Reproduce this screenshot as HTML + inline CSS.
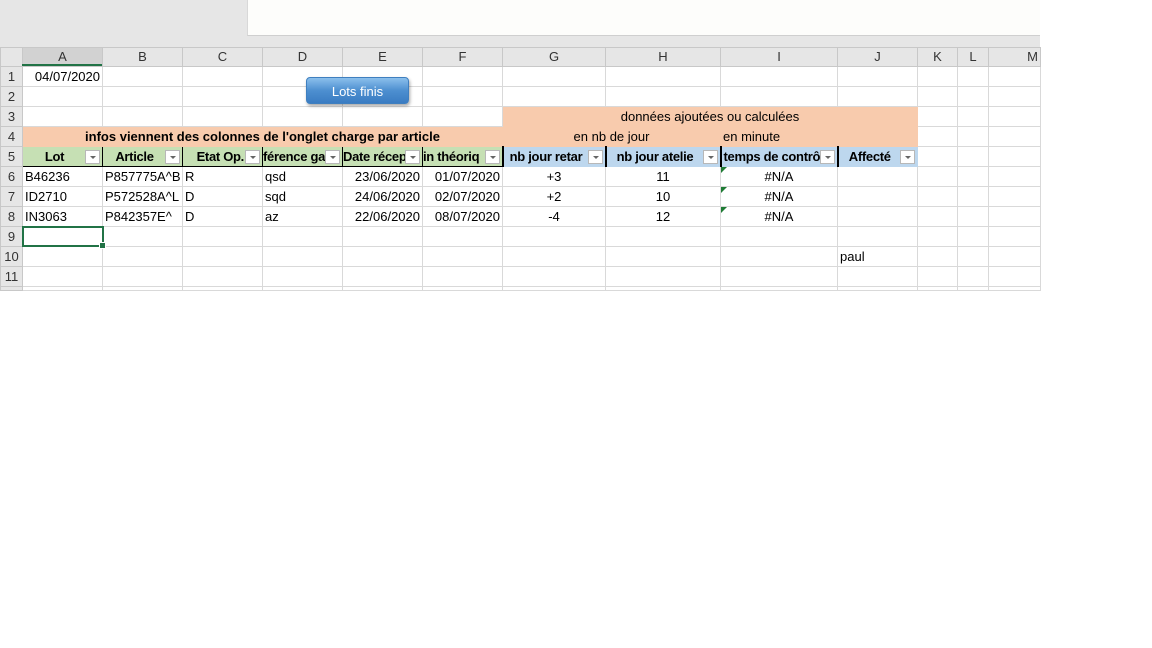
<!DOCTYPE html>
<html><head><meta charset="utf-8"><style>
*{margin:0;padding:0;box-sizing:border-box}
body{width:1152px;height:648px;background:#fff;font-family:"Liberation Sans",sans-serif;font-size:13px;color:#000;position:relative;overflow:hidden}
.top{position:absolute;left:0;top:0;width:1040px;height:47px;background:#e6e6e6}
.wbox{position:absolute;left:247px;top:0;width:793px;height:36px;background:#fdfdfb;border-bottom:1px solid #cfcfcf;border-left:1px solid #d8d8d8}
table{position:absolute;left:0;top:47px;border-collapse:collapse;table-layout:fixed;width:1040px}
td{border:1px solid #d9d9d9;height:20px;white-space:nowrap;overflow:hidden;padding:0 2px;line-height:18px}
tr.ch td{height:19px;background:#e6e6e6;text-align:center;color:#333;border-color:#c8c8c8;font-size:13px}
td.rh{background:#e6e6e6;color:#333;text-align:center;border-color:#c8c8c8;padding:0}
tr.last td{height:4px;line-height:0;font-size:0}
.o{background:#f8cbad;border-color:#f8cbad}
.g{background:#c6e0b4;font-weight:bold;text-align:center;border:1px solid #000;position:relative;padding-right:18px;letter-spacing:-0.3px}
.b{background:#bdd7ee;font-weight:bold;text-align:center;position:relative;padding-right:18px;border-color:#bdd7ee;letter-spacing:-0.3px}
.f{position:absolute;right:2px;top:3px;width:15px;height:14px;background:#fff;border:1px solid #b8b8b8}
.f:after{content:"";position:absolute;left:4px;top:5px;border-left:3px solid transparent;border-right:3px solid transparent;border-top:3px solid #666}
.c{text-align:center}.r{text-align:right}
.tri{position:relative}
.tri:before{content:"";position:absolute;left:0;top:0;border-top:6px solid #1e7b34;border-right:6px solid transparent}
.btn{position:absolute;left:306px;top:77px;width:103px;height:27px;border-radius:4px;background:linear-gradient(#8cc0ec,#4d8fd0 50%,#3a7cc2);color:#fff;text-align:center;line-height:27px;font-size:13px;box-shadow:1px 2px 3px rgba(0,0,0,.35);border:1px solid #3f7fbf}
.sel{position:absolute;left:22px;top:226px;width:82px;height:21px;border:2px solid #217346}
.sel:after{content:"";position:absolute;right:-4px;bottom:-4px;width:5px;height:5px;background:#217346;border:1px solid #fff}
.acol{position:absolute;left:22px;top:64px;width:80px;height:2px;background:#217346}
</style></head><body>
<div class="top"></div><div class="wbox"></div>
<table>
<colgroup><col style="width:22px"><col style="width:80px"><col style="width:80px"><col style="width:80px"><col style="width:80px"><col style="width:80px"><col style="width:80px"><col style="width:103px"><col style="width:115px"><col style="width:117px"><col style="width:80px"><col style="width:40px"><col style="width:31px"><col style="width:52px"></colgroup>
<tr class="ch"><td></td><td style="background:#d2d2d2">A</td><td>B</td><td>C</td><td>D</td><td>E</td><td>F</td><td>G</td><td>H</td><td>I</td><td>J</td><td>K</td><td>L</td><td style="text-align:right">M</td></tr>
<tr><td class="rh">1</td><td class="r">04/07/2020</td><td></td><td></td><td></td><td></td><td></td><td></td><td></td><td></td><td></td><td></td><td></td><td></td></tr>
<tr><td class="rh">2</td><td></td><td></td><td></td><td></td><td></td><td></td><td></td><td></td><td></td><td></td><td></td><td></td><td></td></tr>
<tr><td class="rh">3</td><td></td><td></td><td></td><td></td><td></td><td></td><td class="o c" colspan="4">données ajoutées ou calculées</td><td></td><td></td><td></td></tr>
<tr><td class="rh">4</td><td class="o c" colspan="6" style="font-weight:bold">infos viennent des colonnes de l'onglet charge par article</td><td class="o c" colspan="2">en nb de jour</td><td class="o">en minute</td><td class="o"></td><td></td><td></td><td></td></tr>
<tr><td class="rh">5</td><td class="g">Lot<span class="f"></span></td><td class="g">Article<span class="f"></span></td><td class="g" style="text-align:right">Etat Op.<span class="f"></span></td><td class="g" style="text-align:left;padding-left:0">férence ga<span class="f"></span></td><td class="g" style="text-align:left;padding-left:0">Date récep<span class="f"></span></td><td class="g" style="text-align:left;padding-left:0">in théoriq<span class="f"></span></td><td class="b" style="border-left:2px solid #000">nb jour retar<span class="f"></span></td><td class="b" style="border-left:2px solid #000">nb jour atelie<span class="f"></span></td><td class="b" style="text-align:left;border-left:2px solid #000">temps de contrô<span class="f"></span></td><td class="b" style="border-left:2px solid #000">Affecté<span class="f"></span></td><td></td><td></td><td></td></tr>
<tr><td class="rh">6</td><td>B46236</td><td>P857775A^B</td><td>R</td><td>qsd</td><td class="r">23/06/2020</td><td class="r">01/07/2020</td><td class="c">+3</td><td class="c">11</td><td class="c tri">#N/A</td><td></td><td></td><td></td><td></td></tr>
<tr><td class="rh">7</td><td>ID2710</td><td>P572528A^L</td><td>D</td><td>sqd</td><td class="r">24/06/2020</td><td class="r">02/07/2020</td><td class="c">+2</td><td class="c">10</td><td class="c tri">#N/A</td><td></td><td></td><td></td><td></td></tr>
<tr><td class="rh">8</td><td>IN3063</td><td>P842357E^</td><td>D</td><td>az</td><td class="r">22/06/2020</td><td class="r">08/07/2020</td><td class="c">-4</td><td class="c">12</td><td class="c tri">#N/A</td><td></td><td></td><td></td><td></td></tr>
<tr><td class="rh">9</td><td></td><td></td><td></td><td></td><td></td><td></td><td></td><td></td><td></td><td></td><td></td><td></td><td></td></tr>
<tr><td class="rh">10</td><td></td><td></td><td></td><td></td><td></td><td></td><td></td><td></td><td></td><td>paul</td><td></td><td></td><td></td></tr>
<tr><td class="rh">11</td><td></td><td></td><td></td><td></td><td></td><td></td><td></td><td></td><td></td><td></td><td></td><td></td><td></td></tr>
<tr class="last"><td class="rh"></td><td></td><td></td><td></td><td></td><td></td><td></td><td></td><td></td><td></td><td></td><td></td><td></td><td></td></tr>
</table>
<div class="acol"></div>
<div class="btn">Lots finis</div>
<div class="sel"></div>
</body></html>
